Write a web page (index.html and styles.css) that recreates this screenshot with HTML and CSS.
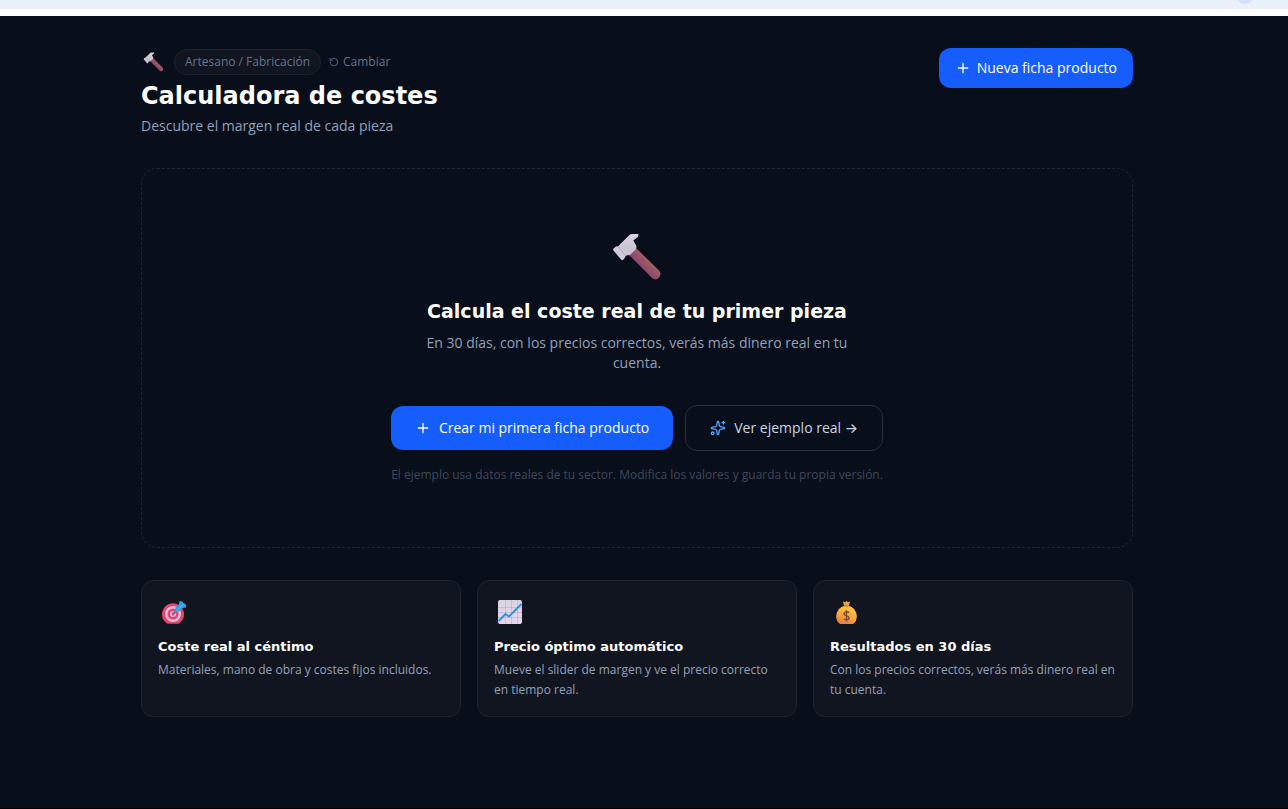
FILE: index.html
```html
<!DOCTYPE html>
<html lang="es">
<head>
    <meta charset="UTF-8">
    <meta name="viewport" content="width=device-width, initial-scale=1.0">
    <title>Calculadora de costes</title>
    <link rel="stylesheet" href="styles.css">
</head>
<body>
    <svg class="defs" width="0" height="0" aria-hidden="true">
        <defs>
            <linearGradient id="handle" x1="1" y1="0" x2="0" y2="1">
                <stop offset="0.35" stop-color="#a5645f"/>
                <stop offset="0.65" stop-color="#8a3f72"/>
            </linearGradient>
            <linearGradient id="steel" x1="0" y1="0" x2="0" y2="1">
                <stop offset="0" stop-color="#d9d3e2"/>
                <stop offset="1" stop-color="#c3bccd"/>
            </linearGradient>
            <linearGradient id="sheet" x1="0" y1="0" x2="0" y2="1">
                <stop offset="0" stop-color="#d8d5df"/>
                <stop offset="1" stop-color="#e6d6ee"/>
            </linearGradient>
            <linearGradient id="gold" x1="0.7" y1="0" x2="0.3" y2="1">
                <stop offset="0" stop-color="#ffcb3e"/>
                <stop offset="0.6" stop-color="#f9a33a"/>
                <stop offset="1" stop-color="#e8794a"/>
            </linearGradient>
            <symbol id="hammer" viewBox="0 0 48 48">
                <path d="M15.500 21.500 22 14 46 37.500Q49 41 46 44.500 42.500 48 39 45Z" fill="url(#handle)"/>
                <path d="M17 1.500Q18 1 19 1H25.500L25 3.700 20.300 7.500 23.300 12.700Q24 14.500 22.500 16.500L17.500 21.500Q15.500 23 13 21.300L7 15.300Q6 12.500 8 10.300Z" fill="url(#steel)"/>
                <path d="M.5 15.500 3 13.500Q4.500 12.800 5.500 14L12 22.500Q12.800 24 11.500 25.300L10 27Q8.800 27.500 8 26.500L.5 17.500Q-.2 16.300.5 15.500Z" fill="#d0cad9"/>
                <path d="M4.500 14 8 10.300 17 20.500 12 23.500Z" fill="#cbc5d5"/>
                <path d="M5.500 14 12 22" stroke="#b4aec0" fill="none"/>
            </symbol>
            <symbol id="plus" viewBox="0 0 24 24">
                <path d="M5 12h14M12 5v14"/>
            </symbol>
        </defs>
    </svg>

    <div class="topbar"><span class="topbar-dot"></span></div>

    <main class="page">
        <div class="container">
            <header class="header">
                <div>
                    <div class="sector">
                        <svg class="sector-icon" viewBox="0 0 48 48" aria-hidden="true"><use href="#hammer"/></svg>
                        <span class="pill">Artesano / Fabricación</span>
                        <button type="button" class="change">
                            <svg class="line-icon" width="10" height="10" viewBox="0 0 24 24" aria-hidden="true"><path d="M3 12a9 9 0 1 0 9-9 9.750 9.750 0 0 0-6.740 2.740L3 8"/><path d="M3 3v5h5"/></svg>
                            Cambiar
                        </button>
                    </div>
                    <h1>Calculadora de costes</h1>
                    <p class="subtitle">Descubre el margen real de cada pieza</p>
                </div>
                <button type="button" class="btn btn-primary btn-small">
                    <svg class="line-icon" width="16" height="16" aria-hidden="true"><use href="#plus"/></svg>
                    Nueva ficha producto
                </button>
            </header>

            <section class="empty">
                <svg class="empty-icon" viewBox="0 0 48 48" aria-hidden="true"><use href="#hammer"/></svg>
                <h2>Calcula el coste real de tu primer pieza</h2>
                <p class="empty-text">En 30 días, con los precios correctos, verás más dinero real en tu cuenta.</p>
                <div class="actions">
                    <button type="button" class="btn btn-primary">
                        <svg class="line-icon" width="16" height="16" aria-hidden="true"><use href="#plus"/></svg>
                        Crear mi primera ficha producto
                    </button>
                    <button type="button" class="btn btn-outline">
                        <svg class="line-icon sparkles" width="16" height="16" viewBox="0 0 24 24" aria-hidden="true">
                            <path d="M11.017 2.814a1 1 0 0 1 1.966 0l1.051 5.558a2 2 0 0 0 1.594 1.594l5.558 1.051a1 1 0 0 1 0 1.966l-5.558 1.051a2 2 0 0 0-1.594 1.594l-1.051 5.558a1 1 0 0 1-1.966 0l-1.051-5.558a2 2 0 0 0-1.594-1.594l-5.558-1.051a1 1 0 0 1 0-1.966l5.558-1.051a2 2 0 0 0 1.594-1.594z"/>
                            <path d="M20 2v4M22 4h-4"/>
                            <circle cx="4" cy="20" r="2"/>
                        </svg>
                        <span>Ver ejemplo real <span class="arrow">→</span></span>
                    </button>
                </div>
                <p class="note">El ejemplo usa datos reales de tu sector. Modifica los valores y guarda tu propia versión.</p>
            </section>

            <section class="cards">
                <article class="card">
                    <svg class="card-icon" viewBox="0 0 32 32" aria-hidden="true">
                        <path d="M9.500 26.800A11 11 0 1 1 20.500 26.800Z" fill="#e8436d"/>
                        <circle cx="15" cy="17" r="8" fill="#e3bcd8"/>
                        <circle cx="15" cy="17" r="5.500" fill="#e8436d"/>
                        <circle cx="15" cy="17" r="3" fill="#e3bcd8"/>
                        <circle cx="15" cy="17" r="1.500" fill="#e8436d"/>
                        <path d="M15 17 21 11" stroke="#5b6f96" stroke-width="2"/>
                        <path d="M16.500 15.500 17.500 10 21 7.500 21.500 4 24.500 4.500 25.500 6.500 28 7.500 28 10.500 24.500 11 22 14Z" fill="#2ba0ea"/>
                        <path d="M18.500 14 26 6.500" stroke="#62c2fa"/>
                    </svg>
                    <h3>Coste real al céntimo</h3>
                    <p>Materiales, mano de obra y costes fijos incluidos.</p>
                </article>
                <article class="card">
                    <svg class="card-icon" viewBox="0 0 32 32" aria-hidden="true">
                        <rect x="4" y="3" width="24" height="24" rx="2" fill="url(#sheet)"/>
                        <path d="M11.500 3v24M17.500 3v24M23.500 3v24M4 10.500h24M4 15.500h24M4 20.500h24" stroke="#b3a6c2" stroke-width="0.500"/>
                        <path d="M4.500 24 11.500 17 15 19.500 27.500 7" fill="none" stroke="#3792dc" stroke-width="2"/>
                    </svg>
                    <h3>Precio óptimo automático</h3>
                    <p>Mueve el slider de margen y ve el precio correcto en tiempo real.</p>
                </article>
                <article class="card">
                    <svg class="card-icon" viewBox="0 0 32 32" aria-hidden="true">
                        <path d="M13 4.500 15 5.300 16.500 4 18 5.300 20 4.500 19 8.500V10H14V8.500Z" fill="#f1a238"/>
                        <path d="M10 27Q6 24 6.200 19C6.500 14 10 10 14 9H19C23 10 26.500 14 26.800 19Q27 24 23 27Z" fill="url(#gold)"/>
                        <path d="M14 9h5" stroke="#a8623a"/>
                        <path d="M19 15.800C18 14.300 14 14.500 14 16.800 14 19.200 19 18.300 19 21 19 23.300 15 23.300 14 21.800M16.500 13.300V24.500" fill="none" stroke="#7c4a3b" stroke-width="1.400"/>
                    </svg>
                    <h3>Resultados en 30 días</h3>
                    <p>Con los precios correctos, verás más dinero real en tu cuenta.</p>
                </article>
            </section>
        </div>
    </main>
</body>
</html>
```
FILE: styles.css
```css
* {
    box-sizing: border-box;
}
body {
    display: flex;
    flex-direction: column;
    min-height: 100vh;
    margin: 0;
    background: #080e1a;
    color: #fff;
    font-family: "Open Sans", sans-serif;
    font-size: 14px;
    line-height: 20px;
}
h1, h2, h3, p {
    margin: 0;
}
h1, h2, h3 {
    font-family: "DejaVu Sans", sans-serif;
    font-weight: bold;
}
button {
    font-family: inherit;
    cursor: pointer;
}
.defs {
    position: absolute;
}
.topbar {
    position: relative;
    overflow: hidden;
    height: 16px;
    background: #ebf1fa;
    border-bottom: 7px solid #fff;
}
.topbar-dot {
    position: absolute;
    right: 34px;
    bottom: 5px;
    width: 18px;
    height: 18px;
    border-radius: 50%;
    background: #d3e0fc;
}
.page {
    flex: 1;
    padding: 32px 30px 32px 16px;
    border-bottom: 1px solid #000;
}
.container {
    max-width: 992px;
    margin: 0 auto;
}
.header {
    display: flex;
    justify-content: space-between;
    align-items: flex-start;
    margin-bottom: 32px;
}
.sector {
    display: flex;
    align-items: center;
    gap: 8px;
    height: 28px;
    margin-bottom: 4px;
}
.sector-icon {
    width: 25px;
    height: 20px;
}
.pill {
    padding: 4px 10px;
    border: 1px solid #1d222e;
    border-radius: 16px;
    background: #111520;
    color: #62748e;
    font-size: 12px;
    line-height: 16px;
}
.change {
    display: flex;
    align-items: center;
    gap: 4px;
    padding: 0;
    border: none;
    background: none;
    color: #62748e;
    font-size: 12px;
    line-height: 16px;
}
.line-icon {
    flex: none;
    fill: none;
    stroke: currentColor;
    stroke-width: 2;
    stroke-linecap: round;
    stroke-linejoin: round;
}
h1 {
    font-size: 24px;
    line-height: 32px;
    margin-bottom: 4px;
}
.subtitle {
    color: #90a1b9;
}
.btn {
    display: flex;
    align-items: center;
    gap: 8px;
    padding: 12px 24px;
    border: none;
    border-radius: 12px;
    font-size: 14px;
    line-height: 20px;
    font-weight: 500;
}
.btn-primary {
    background: #155dfc;
    color: #fff;
}
.btn-primary:hover {
    background: #2b7fff;
}
.btn-small {
    gap: 6px;
    padding: 10px 16px;
}
.btn-outline {
    border: 1px solid #2d313c;
    background: none;
    color: #cad5e2;
}
.sparkles {
    color: #51a2ff;
}
.arrow {
    font-family: Inter, sans-serif;
}
.empty {
    display: flex;
    flex-direction: column;
    align-items: center;
    padding: 64px 32px;
    border: 1px dashed #20242f;
    border-radius: 16px;
    text-align: center;
}
.empty-icon {
    width: 48px;
    height: 48px;
    margin-bottom: 16px;
}
h2 {
    font-size: 19px;
    line-height: 28px;
    margin-bottom: 8px;
}
.empty-text {
    max-width: 448px;
    margin-bottom: 32px;
    color: #90a1b9;
}
.actions {
    display: flex;
    flex-wrap: wrap;
    justify-content: center;
    align-items: center;
    gap: 12px;
    margin-bottom: 16px;
}
.note {
    color: #3c495d;
    font-size: 12px;
    line-height: 16px;
}
.cards {
    display: grid;
    grid-template-columns: repeat(3, 1fr);
    gap: 16px;
    margin-top: 32px;
}
.card {
    padding: 16px;
    border: 1px solid #1f232e;
    border-radius: 12px;
    background: #111520;
}
.card-icon {
    display: block;
    width: 32px;
    height: 32px;
    margin-bottom: 8px;
}
h3 {
    font-size: 13px;
    line-height: 20px;
    margin-bottom: 3px;
}
.card p {
    color: #90a1b9;
    font-size: 12px;
}
@media (max-width: 700px) {
    .cards {
        grid-template-columns: 1fr;
    }
}
```
